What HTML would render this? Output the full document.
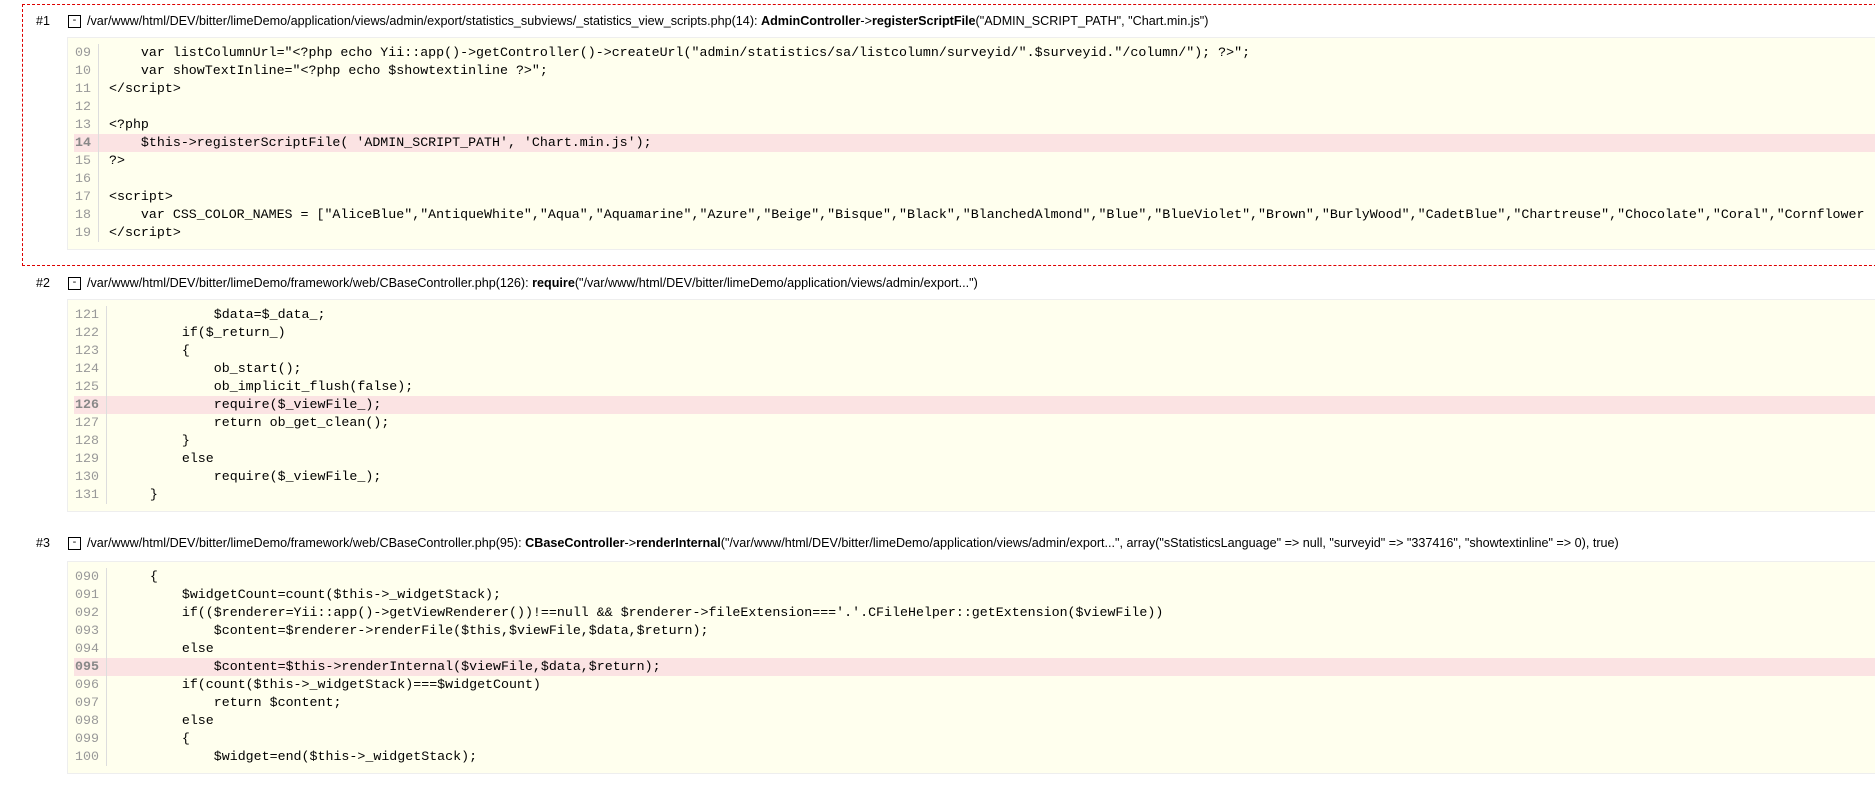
<!DOCTYPE html>
<html><head><meta charset="utf-8">
<style>
body{margin:0;background:#fff;width:1875px;height:785px;overflow:hidden;position:relative;font-family:"Liberation Sans",Verdana,sans-serif;color:#000}
.dash{position:absolute;left:22px;top:4px;width:1900px;height:262px;border:1px dashed #d00;box-sizing:border-box}
.hd{position:absolute;left:0;height:18px;line-height:18px;font-size:12.6px;white-space:nowrap}
.hd .n{position:absolute;left:36px;font-size:12.5px}
.hd .t{position:absolute;left:68px;top:3px;width:11px;height:11px;border:1px solid #000;font-size:11px;line-height:9px;text-align:center}
.hd .p{position:absolute;left:87px}
.blk{position:absolute;left:67px;width:1900px;background:#ffffee;border:1px solid #eee;box-sizing:border-box;padding:6px 0 7px 0}
.ln{height:18px;line-height:18px;font-family:"Liberation Mono",Consolas,monospace;font-size:13.3px;white-space:pre;position:relative}
.ln .g{position:absolute;left:7px;color:#999;border-right:1px solid #ddd;padding-right:7px}
.ln .c{position:absolute;color:#000}
.w2 .g{width:16px}.w2 .c{left:41px}
.w3 .g{width:24px}.w3 .c{left:50px}
.hl{background:#fbe3e3;margin-left:6px}
.hl .g{left:1px;font-weight:bold;color:#888}
.w2 .hl .c{left:35px}.w3 .hl .c{left:44px}
b{font-weight:bold}
</style></head><body>
<div class="dash"></div>

<div class="hd" style="top:12px"><span class="n">#1</span><span class="t">-</span><span class="p">/var/www/html/DEV/bitter/limeDemo/application/views/admin/export/statistics_subviews/_statistics_view_scripts.php(14): <b>AdminController</b>-&gt;<b>registerScriptFile</b>("ADMIN_SCRIPT_PATH", "Chart.min.js")</span></div>
<div class="blk w2" style="top:37px">
<div class="ln"><span class="g">09</span><span class="c">    var listColumnUrl="&lt;?php echo Yii::app()-&gt;getController()-&gt;createUrl("admin/statistics/sa/listcolumn/surveyid/".$surveyid."/column/"); ?&gt;";</span></div>
<div class="ln"><span class="g">10</span><span class="c">    var showTextInline="&lt;?php echo $showtextinline ?&gt;";</span></div>
<div class="ln"><span class="g">11</span><span class="c">&lt;/script&gt;</span></div>
<div class="ln"><span class="g">12</span><span class="c"></span></div>
<div class="ln"><span class="g">13</span><span class="c">&lt;?php</span></div>
<div class="ln hl"><span class="g">14</span><span class="c">    $this-&gt;registerScriptFile( 'ADMIN_SCRIPT_PATH', 'Chart.min.js');</span></div>
<div class="ln"><span class="g">15</span><span class="c">?&gt;</span></div>
<div class="ln"><span class="g">16</span><span class="c"></span></div>
<div class="ln"><span class="g">17</span><span class="c">&lt;script&gt;</span></div>
<div class="ln"><span class="g">18</span><span class="c">    var CSS_COLOR_NAMES = ["AliceBlue","AntiqueWhite","Aqua","Aquamarine","Azure","Beige","Bisque","Black","BlanchedAlmond","Blue","BlueViolet","Brown","BurlyWood","CadetBlue","Chartreuse","Chocolate","Coral","Cornflower</span></div>
<div class="ln"><span class="g">19</span><span class="c">&lt;/script&gt;</span></div>
</div>

<div class="hd" style="top:274px"><span class="n">#2</span><span class="t">-</span><span class="p">/var/www/html/DEV/bitter/limeDemo/framework/web/CBaseController.php(126): <b>require</b>("/var/www/html/DEV/bitter/limeDemo/application/views/admin/export...")</span></div>
<div class="blk w3" style="top:299px">
<div class="ln"><span class="g">121</span><span class="c">            $data=$_data_;</span></div>
<div class="ln"><span class="g">122</span><span class="c">        if($_return_)</span></div>
<div class="ln"><span class="g">123</span><span class="c">        {</span></div>
<div class="ln"><span class="g">124</span><span class="c">            ob_start();</span></div>
<div class="ln"><span class="g">125</span><span class="c">            ob_implicit_flush(false);</span></div>
<div class="ln hl"><span class="g">126</span><span class="c">            require($_viewFile_);</span></div>
<div class="ln"><span class="g">127</span><span class="c">            return ob_get_clean();</span></div>
<div class="ln"><span class="g">128</span><span class="c">        }</span></div>
<div class="ln"><span class="g">129</span><span class="c">        else</span></div>
<div class="ln"><span class="g">130</span><span class="c">            require($_viewFile_);</span></div>
<div class="ln"><span class="g">131</span><span class="c">    }</span></div>
</div>

<div class="hd" style="top:534px"><span class="n">#3</span><span class="t">-</span><span class="p">/var/www/html/DEV/bitter/limeDemo/framework/web/CBaseController.php(95): <b>CBaseController</b>-&gt;<b>renderInternal</b>("/var/www/html/DEV/bitter/limeDemo/application/views/admin/export...", array("sStatisticsLanguage" =&gt; null, "surveyid" =&gt; "337416", "showtextinline" =&gt; 0), true)</span></div>
<div class="blk w3" style="top:561px">
<div class="ln"><span class="g">090</span><span class="c">    {</span></div>
<div class="ln"><span class="g">091</span><span class="c">        $widgetCount=count($this-&gt;_widgetStack);</span></div>
<div class="ln"><span class="g">092</span><span class="c">        if(($renderer=Yii::app()-&gt;getViewRenderer())!==null &amp;&amp; $renderer-&gt;fileExtension==='.'.CFileHelper::getExtension($viewFile))</span></div>
<div class="ln"><span class="g">093</span><span class="c">            $content=$renderer-&gt;renderFile($this,$viewFile,$data,$return);</span></div>
<div class="ln"><span class="g">094</span><span class="c">        else</span></div>
<div class="ln hl"><span class="g">095</span><span class="c">            $content=$this-&gt;renderInternal($viewFile,$data,$return);</span></div>
<div class="ln"><span class="g">096</span><span class="c">        if(count($this-&gt;_widgetStack)===$widgetCount)</span></div>
<div class="ln"><span class="g">097</span><span class="c">            return $content;</span></div>
<div class="ln"><span class="g">098</span><span class="c">        else</span></div>
<div class="ln"><span class="g">099</span><span class="c">        {</span></div>
<div class="ln"><span class="g">100</span><span class="c">            $widget=end($this-&gt;_widgetStack);</span></div>
</div>
</body></html>
